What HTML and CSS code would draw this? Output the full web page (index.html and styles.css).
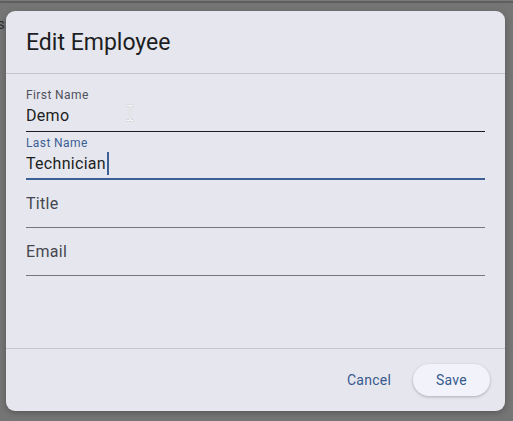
FILE: index.html
```html
<!DOCTYPE html>
<html>
<head>
<meta charset="utf-8">
<link rel="stylesheet" href="styles.css">
</head>
<body>
<div class="topline"></div>
<span class="behind">s</span>
<div class="stage">
  <div class="dialog">
    <div class="dlg-header">
      <h1 class="dlg-title">Edit Employee</h1>
    </div>
    <div class="dlg-body">
      <div class="field hovered">
        <div class="f-label">First Name</div>
        <div class="f-input">Demo</div>
      </div>
      <div class="field focused">
        <div class="f-label">Last Name</div>
        <div class="f-input">Technician<span class="caret"></span></div>
      </div>
      <div class="field empty">
        <div class="f-placeholder">Title</div>
      </div>
      <div class="field empty">
        <div class="f-placeholder">Email</div>
      </div>
    </div>
    <div class="dlg-footer">
      <button class="btn text-btn">Cancel</button>
      <button class="btn tonal-btn">Save</button>
    </div>
  </div>
</div>
<svg class="ibeam" width="8" height="18" viewBox="0 0 8 18">
  <path d="M1 1.5 H3 Q4 1.5 4 2.5 V15.5 Q4 16.5 3 16.5 H1 M7 1.5 H5 Q4 1.5 4 2.5 M4 15.5 Q4 16.5 5 16.5 H7" fill="none" stroke="#c9cad0" stroke-width="2.2" stroke-linecap="round"/>
  <path d="M1 1.5 H3 Q4 1.5 4 2.5 V15.5 Q4 16.5 3 16.5 H1 M7 1.5 H5 Q4 1.5 4 2.5 M4 15.5 Q4 16.5 5 16.5 H7" fill="none" stroke="#ffffff" stroke-width="1" stroke-linecap="round"/>
</svg>
</body>
</html>
```

FILE: styles.css
```css
html, body {
  margin: 0;
  padding: 0;
}
body {
  width: 513px;
  height: 421px;
  background: #757575;
  font-family: Roboto, "Noto Sans", "Liberation Sans", sans-serif;
  position: relative;
  overflow: hidden;
}
.topline {
  height: 1px;
  border-bottom: 2px solid #5e5e5e;
  background: #7a7a7a;
}
.behind {
  position: absolute;
  left: -3px;
  top: 15px;
  font-size: 15px;
  color: #2c2c2c;
}
.stage {
  padding: 8px 0 0 6px;
}
.dialog {
  width: 499px;
  height: 400px;
  background: #e6e7ee;
  border-radius: 9px;
  box-shadow: 0 2px 6px rgba(0, 0, 0, 0.25);
  display: flex;
  flex-direction: column;
}
.dlg-header {
  padding: 16px 20px 14px;
  border-bottom: 1px solid #c5c6cd;
}
.dlg-title {
  margin: 0;
  font-size: 23px;
  line-height: 32px;
  font-weight: 400;
  color: #1d1e23;
}
.dlg-body {
  flex: 1;
  padding: 10px 20px 0;
}
.field {
  height: 47px;
  border-bottom: 1px solid #75767d;
  display: flex;
  flex-direction: column;
  position: relative;
}
.field.hovered {
  border-bottom-color: #1b1c21;
}
.field.focused {
  height: 46px;
  border-bottom: 2px solid #3c5f94;
}
.f-label {
  margin-top: 3px;
  font-size: 12px;
  line-height: 16px;
  letter-spacing: 0.4px;
  color: #50515a;
}
.field.focused .f-label {
  color: #3c5f94;
}
.f-input {
  margin-top: 1px;
  font-size: 16px;
  line-height: 23px;
  letter-spacing: 0.3px;
  color: #1d1e23;
  display: flex;
  align-items: flex-start;
}
.caret {
  display: inline-block;
  width: 2px;
  height: 23px;
  margin-left: 1px;
  background: #3c5f94;
}
.f-placeholder {
  margin-top: 12px;
  font-size: 16px;
  line-height: 23px;
  letter-spacing: 0.3px;
  color: #45464e;
}
.dlg-footer {
  height: 63px;
  box-sizing: border-box;
  border-top: 1px solid #c5c6cd;
  padding: 0 15px 0 0;
  display: flex;
  justify-content: flex-end;
  align-items: center;
  gap: 10px;
}
.btn {
  font-family: Roboto, "Noto Sans", "Liberation Sans", sans-serif;
  font-size: 14px;
  font-weight: 400;
  letter-spacing: 0.25px;
  height: 32px;
  border: none;
  border-radius: 16px;
  color: #38598d;
  background: transparent;
  padding: 0 12px;
}
.tonal-btn {
  padding: 0 23px;
  background: #f2f3fa;
  box-shadow: 0 1px 3px rgba(0, 0, 0, 0.25);
}
.ibeam {
  position: absolute;
  left: 126px;
  top: 104px;
}
```
